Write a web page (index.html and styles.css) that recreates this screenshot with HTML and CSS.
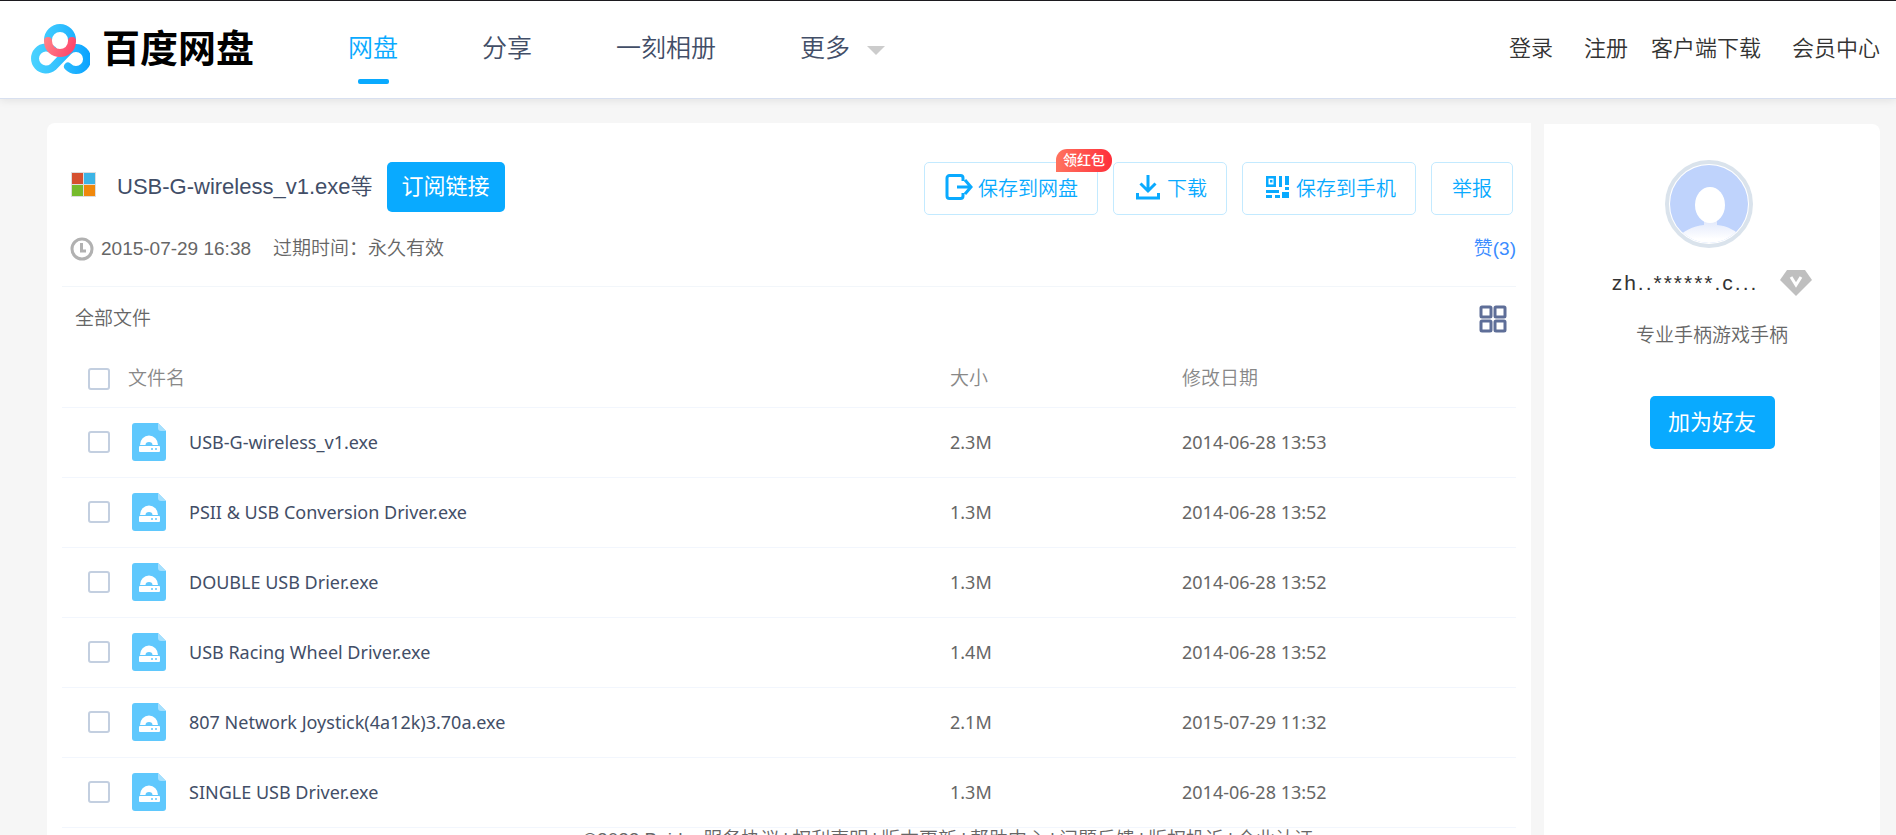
FILE: index.html
```html
<!DOCTYPE html>
<html lang="zh-CN">
<head>
<meta charset="utf-8">
<title>百度网盘</title>
<link rel="stylesheet" href="styles.css">
</head>
<body>
<svg class="defs" aria-hidden="true">
  <symbol id="file-exe" viewBox="0 0 34 38">
    <path fill="#5fc8fd" d="M3 0h23l8 8v27a3 3 0 0 1-3 3H3a3 3 0 0 1-3-3V3a3 3 0 0 1 3-3z"/>
    <path fill="#a5e0fe" d="M26 0l8 8h-5a3 3 0 0 1-3-3z"/>
    <path fill="#fff" d="M8 22a9 9.500 0 0 1 18 0h-5.500a3.500 3 0 0 0-7 0z"/>
    <rect x="7" y="23" width="21" height="6" rx="1" fill="#fff"/>
    <circle cx="20" cy="26" r="1" fill="#5fc8fd"/><circle cx="24" cy="26" r="1" fill="#5fc8fd"/>
  </symbol>
</svg>
<header class="header">
  <a class="logo" href="#" aria-label="百度网盘">
    <svg class="logo-mark" viewBox="0 0 60 50" fill="none" stroke-linecap="round" stroke-width="8">
      <defs>
        <linearGradient id="blue" gradientUnits="userSpaceOnUse" x1="0" y1="0" x2="60" y2="0"><stop offset="0" stop-color="#4bd3ff"/><stop offset=".45" stop-color="#35c3ff"/><stop offset="1" stop-color="#0aa2ff"/></linearGradient>
        <linearGradient id="red" gradientUnits="userSpaceOnUse" x1="16" y1="16" x2="46" y2="28"><stop offset="0" stop-color="#ff7f87"/><stop offset="1" stop-color="#ff4069"/></linearGradient>
      </defs>
      <path stroke="url(#blue)" d="M18 16a12 12 0 0 1 24 0M38 42.500a11 11 0 1 0 0-15L23 43a11 11 0 1 1 0-17"/>
      <path stroke="url(#red)" d="M18 17c0 16 24 16 24 0"/>
    </svg>
    <span class="logo-name">百度网盘</span>
  </a>
  <nav class="nav">
    <a class="nav-item active" href="#">网盘</a>
    <a class="nav-item" href="#">分享</a>
    <a class="nav-item" href="#">一刻相册</a>
    <a class="nav-item more" href="#">更多</a>
  </nav>
  <nav class="account">
    <a href="#">登录</a>
    <a class="register" href="#">注册</a>
    <a href="#">客户端下载</a>
    <a class="member" href="#">会员中心</a>
  </nav>
</header>
<div class="page">
  <main class="share">
    <div class="share-head">
      <svg class="win" viewBox="0 0 25 25"><path fill="#ddd" d="M0 0h25v25H0z"/><path fill="#d5502f" d="M1 1h11v11H1z"/><path fill="#3cb4e5" d="M13 1h11v11H13z"/><path fill="#76bb2c" d="M1 13h11v11H1z"/><path fill="#f0880c" d="M13 13h11v11H13z"/></svg>
      <h1 class="title">USB-G-wireless_v1.exe等</h1>
      <button class="primary subscribe" type="button">订阅链接</button>
      <div class="actions">
        <button class="action" type="button">
          <svg class="ico" viewBox="0 0 28 26" fill="none" stroke="#09aaff" stroke-width="3"><path d="M18 7V4a2.500 2.500 0 0 0-2.500-2.500h-11A2.500 2.500 0 0 0 2 4v18a2.500 2.500 0 0 0 2.500 2.500h11A2.500 2.500 0 0 0 18 22v-3M12 13h14M20 6l6 7-6 7"/></svg>
          <span>保存到网盘</span>
          <span class="badge">领红包</span>
        </button>
        <button class="action" type="button">
          <svg class="ico" viewBox="0 0 26 26" fill="none" stroke="#09aaff" stroke-width="3"><path d="M13 1v16M5.500 9.500l7.500 7.500 7.500-7.500M2.500 19v5h21v-5"/></svg>
          <span>下载</span>
        </button>
        <button class="action" type="button">
          <svg class="ico" viewBox="0 0 24 26" fill="#09aaff"><path fill-rule="evenodd" d="M1 2h10v11H1zM3.500 4.500v6h5v-6zM5 6h2.500v2.500H5zM14 2h3v11h-3zM20 2h4v9h-4zM20 13h4v3h-4zM1 16h13v3H1zM17 18h7v6h-7zM1 21h6v3H1zM10 21h5v3h-5z"/></svg>
          <span>保存到手机</span>
        </button>
        <button class="action report" type="button">举报</button>
      </div>
    </div>
    <div class="meta">
      <svg class="clock" viewBox="0 0 24 24" fill="none" stroke="#b1b1b1" stroke-width="3"><circle cx="12" cy="12" r="10"/><path d="M11.500 6v8H16"/></svg>
      <time>2015-07-29 16:38</time>
      <span class="expiry">过期时间：永久有效</span>
      <a class="like" href="#">赞(3)</a>
    </div>
    <div class="list-bar">
      <span>全部文件</span>
      <button class="grid-toggle" type="button" aria-label="缩略图模式"><svg viewBox="0 0 28 28" fill="none" stroke="#5e6e98" stroke-width="3"><rect x="2" y="2" width="10" height="10" rx="1"/><rect x="16" y="2" width="10" height="10" rx="1"/><rect x="2" y="16" width="10" height="10" rx="1"/><rect x="16" y="16" width="10" height="10" rx="1"/></svg></button>
    </div>
    <table class="files">
      <thead><tr><th><div class="cell"><input type="checkbox" id="all"><label for="all">文件名</label></div></th><th class="size">大小</th><th class="date">修改日期</th></tr></thead>
      <tbody>
        <tr><td><div class="cell"><input type="checkbox" id="f1"><svg class="file"><use href="#file-exe"/></svg><label for="f1">USB-G-wireless_v1.exe</label></div></td><td>2.3M</td><td>2014-06-28 13:53</td></tr>
        <tr><td><div class="cell"><input type="checkbox" id="f2"><svg class="file"><use href="#file-exe"/></svg><label for="f2">PSII &amp; USB Conversion Driver.exe</label></div></td><td>1.3M</td><td>2014-06-28 13:52</td></tr>
        <tr><td><div class="cell"><input type="checkbox" id="f3"><svg class="file"><use href="#file-exe"/></svg><label for="f3">DOUBLE USB Drier.exe</label></div></td><td>1.3M</td><td>2014-06-28 13:52</td></tr>
        <tr><td><div class="cell"><input type="checkbox" id="f4"><svg class="file"><use href="#file-exe"/></svg><label for="f4">USB Racing Wheel Driver.exe</label></div></td><td>1.4M</td><td>2014-06-28 13:52</td></tr>
        <tr><td><div class="cell"><input type="checkbox" id="f5"><svg class="file"><use href="#file-exe"/></svg><label for="f5">807 Network Joystick(4a12k)3.70a.exe</label></div></td><td>2.1M</td><td>2015-07-29 11:32</td></tr>
        <tr><td><div class="cell"><input type="checkbox" id="f6"><svg class="file"><use href="#file-exe"/></svg><label for="f6">SINGLE USB Driver.exe</label></div></td><td>1.3M</td><td>2014-06-28 13:52</td></tr>
      </tbody>
    </table>
    <footer class="footer">
      <span class="copyright">©2022 Baidu</span>
      <a href="#">服务协议</a><span>|</span><a href="#">权利声明</a><span>|</span><a href="#">版本更新</a><span>|</span><a href="#">帮助中心</a><span>|</span><a href="#">问题反馈</a><span>|</span><a href="#">版权投诉</a><span>|</span><a href="#">企业认证</a>
    </footer>
  </main>
  <aside class="owner">
    <svg class="avatar" viewBox="0 0 88 88">
      <defs><clipPath id="face"><circle cx="44" cy="44" r="39"/></clipPath>
      <linearGradient id="body" x1="0" y1="0" x2="0" y2="1"><stop offset="0" stop-color="#dde5fb"/><stop offset=".7" stop-color="#fff"/></linearGradient></defs>
      <circle cx="44" cy="44" r="42" fill="#fff" stroke="#dae3ec" stroke-width="4"/>
      <g clip-path="url(#face)"><path fill="#bfd3fc" d="M0 0h88v88H0z"/><path fill="url(#body)" d="M39 58h13v7c10 1 20 5 26 15v8H10v-8c8-9 18-14 29-15z"/><ellipse cx="45" cy="45" rx="15" ry="18" fill="#fff"/></g>
    </svg>
    <div class="owner-name"><span>zh..******.c...</span><svg class="vip" viewBox="0 0 32 26"><path fill="#bfbfbf" d="M7 0h18l7 10-16 16L0 10z"/><path fill="none" stroke="#fff" stroke-width="3" d="M11 7l5 8 5-8"/></svg></div>
    <p class="bio">专业手柄游戏手柄</p>
    <button class="primary friend" type="button">加为好友</button>
  </aside>
</div>
</body>
</html>
```
FILE: styles.css
```css
* { box-sizing: border-box; }
html { height: 100%; overflow: hidden; }
body {
  margin: 0;
  height: 100%;
  display: flex;
  flex-direction: column;
  overflow: hidden;
  background: #f6f6f6;
  color: #666;
  font: 350 19px/28px "Liberation Sans", "Noto Sans CJK SC", sans-serif;
}
a { color: inherit; text-decoration: none; }
button { font: inherit; padding: 0; cursor: pointer; }
svg { display: block; flex: none; }
.defs { position: absolute; width: 0; height: 0; }

.header {
  flex: none;
  height: 99px;
  display: flex;
  align-items: flex-start;
  padding: 0 16px 0 30px;
  background: #fff;
  border-top: 1px solid #1c1a1f;
  border-bottom: 1px solid #d8e0f0;
  box-shadow: 0 2px 8px rgba(0, 0, 0, .08);
}
.logo { display: flex; gap: 12px; padding-top: 23px; color: #000; }
.logo-mark { width: 60px; height: 50px; }
.logo-name { font-size: 38px; line-height: 50px; font-weight: 700; }
.nav { display: flex; align-items: flex-start; gap: 84px; margin-left: 94px; color: #424e67; font-size: 25px; line-height: 40px; }
.nav-item { display: flex; flex-direction: column; align-items: center; padding-top: 27px; }
.active { color: #09aaff; }
.active::after { content: ""; width: 31px; height: 5px; margin-top: 11px; border-radius: 2px; background: #09aaff; }
.more { flex-direction: row; gap: 17px; }
.more::after { content: ""; border: 9px solid transparent; border-top-color: #ccc; border-bottom: 0; margin-top: 4px; }
.account { display: flex; margin-left: auto; padding-top: 28px; color: #333; font-size: 22px; line-height: 40px; }
.register { margin: 0 23px 0 31px; }
.member { margin-left: 31px; }

.page { flex: 1; min-height: 0; display: grid; grid-template-columns: 1fr 336px; gap: 13px; padding: 24px 16px 0 47px; }
.share { min-width: 0; padding: 39px 15px 0; background: #fff; border-radius: 8px 0 0 0; }
.share-head { display: flex; align-items: flex-start; padding: 0 3px 0 9px; }
.win { width: 25px; height: 25px; margin-top: 10px; }
.title { margin: 10px 14px 0 21px; color: #424e67; font-size: 22px; line-height: 30px; font-weight: 350; }
.primary { border: 0; border-radius: 5px; background: #09aaff; color: #fff; font-size: 22px; font-weight: 400; }
.subscribe { width: 118px; height: 50px; }
.actions { display: flex; gap: 15px; margin-left: auto; }
.action {
  position: relative;
  display: flex;
  align-items: center;
  justify-content: center;
  gap: 5px;
  height: 53px;
  padding: 0 19px 0 20px;
  border: 1px solid #c3eaff;
  border-radius: 5px;
  background: #fff;
  color: #09aaff;
  font-size: 20px;
}
.report { padding: 0 20px; }
.ico { height: 26px; width: 28px; margin-bottom: 3px; }
.badge {
  position: absolute;
  top: -14px;
  right: -15px;
  width: 56px;
  height: 23px;
  border-radius: 11px 11px 11px 0;
  background: linear-gradient(90deg, #ff735f, #ff2f3a);
  color: #fff;
  font-size: 14px;
  line-height: 22px;
  font-weight: 500;
}
.meta { display: flex; align-items: center; height: 72px; padding: 0 0 3px 8px; border-bottom: 1px solid #f2f6fa; }
.clock { width: 24px; height: 24px; margin-right: 7px; }
.expiry { margin-left: 22px; }
.like { margin-left: auto; color: #3b8cff; }
.list-bar { display: flex; justify-content: space-between; align-items: center; height: 62px; padding: 2px 9px 0 13px; }
.grid-toggle { border: 0; background: none; }
.grid-toggle svg { width: 28px; height: 28px; }

.files { width: 100%; table-layout: fixed; border-collapse: collapse; }
.files th, .files td { height: 70px; padding: 0; text-align: left; border-bottom: 1px solid #f2f6fd; }
.files th { height: 58px; padding-top: 3px; color: #888; font-weight: 350; }
.size { width: 232px; }
.date { width: 334px; }
.files td { font: 400 18px/28px "Noto Sans", sans-serif; }
.cell { display: flex; align-items: center; padding-left: 26px; }
.cell input { appearance: none; width: 22px; height: 22px; margin: 0 18px 0 0; border: 2px solid #c3cfe0; border-radius: 3px; background: #fff; }
.files td label { color: #424e67; }
.file { width: 34px; height: 38px; margin: 0 23px 0 4px; }
/* spans the full page width, side column included */
.footer { display: flex; justify-content: center; gap: 4px; margin: 0 -380px 0 -62px; line-height: 24px; white-space: nowrap; }
.copyright { margin-right: 6px; }

.owner { display: flex; flex-direction: column; align-items: center; margin-top: 1px; padding-top: 36px; background: #fff; border-radius: 0 8px 0 0; }
.avatar { width: 88px; height: 88px; margin-right: 6px; }
.owner-name { display: flex; align-items: center; gap: 22px; margin-top: 21px; color: #333; font-size: 21px; letter-spacing: 2px; }
.vip { width: 32px; height: 26px; }
.bio { margin: 25px 0 46px; }
.friend { width: 125px; height: 53px; }
```
